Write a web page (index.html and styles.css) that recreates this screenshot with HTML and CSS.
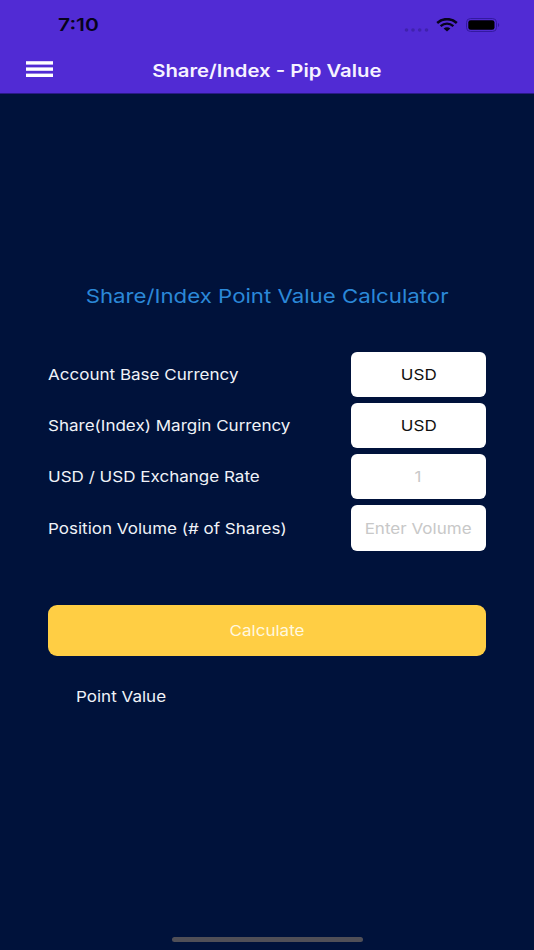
FILE: index.html
```
<!DOCTYPE html>
<html lang="en">
<head>
    <meta charset="UTF-8">
    <meta name="viewport" content="width=device-width, initial-scale=1.0">
    <title>Share/Index - Pip Value</title>
    <link rel="stylesheet" href="styles.css">
</head>
<body>
    <header>
        <div class="status-bar">
            <span class="time">7:10</span>
            <div class="status-icons">
                <svg class="signal" width="26" height="4" viewBox="0 0 26 4">
                    <circle cx="2.5" cy="2" r="1.8"/>
                    <circle cx="9" cy="2" r="1.8"/>
                    <circle cx="15.7" cy="2" r="1.8"/>
                    <circle cx="22.5" cy="2" r="1.8"/>
                </svg>
                <svg class="wifi" width="22" height="14" viewBox="0 0 22 14">
                    <path d="M1.2 4.9C7 -0.1 15 -0.1 20.8 4.9" fill="none" stroke="#07031c" stroke-width="2.6"/>
                    <path d="M4.6 8.1C8.5 4.8 13.5 4.8 17.4 8.1" fill="none" stroke="#07031c" stroke-width="2.4"/>
                    <path d="M7.6 10.5C9.7 8.7 12.3 8.7 14.4 10.5L11 13.6Z" fill="#07031c"/>
                </svg>
                <svg class="battery" width="34" height="14" viewBox="0 0 34 14">
                    <rect x="0.5" y="0.5" width="30" height="13" rx="4" fill="none" stroke="#3319a0"/>
                    <rect x="2.3" y="2.2" width="26.2" height="9.6" rx="2.4" fill="#000"/>
                    <path d="M32 5C33.6 5.5 33.6 8.5 32 9Z" fill="#3319a0"/>
                </svg>
            </div>
        </div>
        <div class="nav-bar">
            <button class="menu-btn" aria-label="Menu">
                <svg width="27" height="17" viewBox="0 0 27 17" fill="#fff">
                    <rect y="0.2" width="27" height="3.4"/>
                    <rect y="6.4" width="27" height="3.4"/>
                    <rect y="12.6" width="27" height="3.4"/>
                </svg>
            </button>
            <h1><span class="wide">Share/Index - Pip Value</span></h1>
        </div>
    </header>

    <main>
        <h2><span class="wide">Share/Index Point Value Calculator</span></h2>
        <div class="form">
            <div class="row">
                <label class="wide">Account Base Currency</label>
                <div class="field"><span class="wide">USD</span></div>
            </div>
            <div class="row">
                <label class="wide">Share(Index) Margin Currency</label>
                <div class="field"><span class="wide">USD</span></div>
            </div>
            <div class="row">
                <label class="wide">USD / USD Exchange Rate</label>
                <div class="field placeholder"><span class="wide">1</span></div>
            </div>
            <div class="row">
                <label class="wide">Position Volume (# of Shares)</label>
                <div class="field placeholder"><span class="wide">Enter Volume</span></div>
            </div>
        </div>
        <button class="calculate"><span class="wide">Calculate</span></button>
        <p class="result"><span class="wide">Point Value</span></p>
    </main>

    <div class="home-indicator"></div>
</body>
</html>
```
FILE: styles.css
```
* {
    margin: 0;
    padding: 0;
    box-sizing: border-box;
    font-family: Inter, "Liberation Sans", sans-serif;
}

body {
    display: flex;
    flex-direction: column;
    height: 950px;
    overflow: hidden;
    background-color: #00123b;
    color: #f0f2f8;
    font-size: 15px;
}

button {
    border: none;
    background: none;
}

/* expanded letterforms */
.wide {
    display: inline-block;
    white-space: nowrap;
    transform: scaleX(1.135);
}

header {
    height: 94px;
    background-color: #512bd4;
    border-bottom: 1px solid #2a1a86;
}

.status-bar {
    display: flex;
    justify-content: space-between;
    height: 48px;
    padding: 0 34px 0 58px;
}

.time {
    height: 50px;
    line-height: 50px;
    font-size: 17.5px;
    font-weight: 600;
    color: #07031c;
    transform: scaleX(1.2);
    transform-origin: left;
}

.status-icons {
    display: flex;
    padding-top: 18px;
}

.signal {
    margin: 10px 6px 0 0;
    fill: #4022ae;
}

.wifi {
    margin-right: 8px;
}

.nav-bar {
    display: grid;
    grid-template-columns: 54px 1fr 54px;
    height: 45px;
}

.menu-btn {
    display: flex;
    margin: 13px 0 0 26px;
}

h1 {
    line-height: 46px;
    font-size: 17.5px;
    font-weight: 600;
    text-align: center;
    color: #f6f2ff;
}

h1 .wide {
    transform: scaleX(1.16);
}

main {
    flex: 1;
    padding: 185px 48px 0;
}

h2 {
    height: 36px;
    line-height: 36px;
    font-size: 19px;
    font-weight: 400;
    text-align: center;
    color: #2b88d8;
}

h2 .wide {
    transform: scaleX(1.17);
}

.form {
    display: flex;
    flex-direction: column;
    gap: 6px;
    margin-top: 36.6px;
}

.row {
    display: flex;
    align-items: center;
    justify-content: space-between;
}

.row label {
    transform-origin: left;
}

.field {
    display: flex;
    align-items: center;
    justify-content: center;
    width: 135px;
    height: 45.3px;
    border-radius: 6px;
    background-color: #fff;
    color: #111;
}

.placeholder {
    color: #c8c8c8;
}

.calculate {
    display: block;
    width: 100%;
    height: 51.5px;
    margin-top: 54px;
    border-radius: 9px;
    background-color: #ffce44;
    color: #fff8df;
    font-size: 15px;
}

.result {
    margin: 31px 0 0 28px;
}

.result .wide {
    transform-origin: left;
}

.home-indicator {
    width: 191px;
    height: 5px;
    margin: 0 auto 8px;
    border-radius: 3px;
    background-color: #504f57;
}
```
